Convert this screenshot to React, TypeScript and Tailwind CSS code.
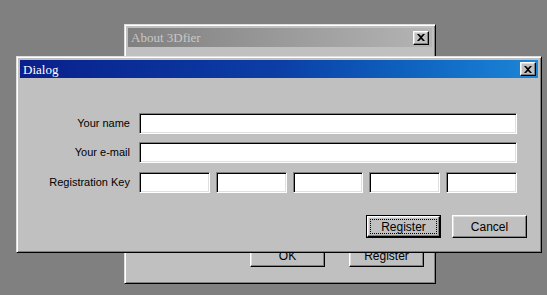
import React from "react";

const raised =
  "border border-t-white border-l-white border-b-black border-r-black shadow-[inset_-1px_-1px_#808080,inset_1px_1px_#dfdfdf]";
const sunken =
  "border border-t-[#808080] border-l-[#808080] border-b-white border-r-white shadow-[inset_1px_1px_#000,inset_-1px_-1px_#dfdfdf]";

function CloseBox() {
  return (
    <div
      className={`w-[16px] h-[14px] bg-[#c0c0c0] flex items-center justify-center ${raised}`}
    >
      <svg width="8" height="7" viewBox="0 0 8 7">
        <path d="M0 0h2l2 2 2-2h2L5 3.5 8 7H6L4 5 2 7H0l3-3.5z" fill="#000" />
      </svg>
    </div>
  );
}

function Field({ className = "" }: { className?: string }) {
  return <div className={`h-[21px] bg-white ${sunken} ${className}`} />;
}

function Button({
  label,
  primary,
  className = "",
}: {
  label: string;
  primary?: boolean;
  className?: string;
}) {
  if (primary) {
    return (
      <div className={`w-[75px] h-[23px] border border-black ${className}`}>
        <div className={`w-full h-full bg-[#c0c0c0] ${raised} p-[2px]`}>
          <div className="w-full h-full border border-dotted border-black flex items-center justify-center text-[12px] text-black">
            {label}
          </div>
        </div>
      </div>
    );
  }
  return (
    <div
      className={`w-[75px] h-[23px] bg-[#c0c0c0] ${raised} flex items-center justify-center text-[12px] text-black ${className}`}
    >
      {label}
    </div>
  );
}

export default function App() {
  return (
    <div
      className="relative w-[547px] h-[295px] bg-[#808080] overflow-hidden"
      style={{ fontFamily: '"Liberation Sans", Arial, sans-serif' }}
    >
      {/* back window */}
      <div className="absolute left-[124px] top-[24px] w-[312px] h-[260px] bg-[#c0c0c0] p-[2px] border border-t-[#dfdfdf] border-l-[#dfdfdf] border-b-black border-r-black shadow-[inset_1px_1px_#fff,inset_-1px_-1px_#808080]">
        <div className="h-[19px] mx-[1px] mt-[1px] bg-gradient-to-r from-[#808080] to-[#b4b4b4] flex items-center justify-between pl-[3px] pr-[3px]">
          <span
            className="text-[13px] text-[#c8c8c8] leading-none"
            style={{ fontFamily: '"Liberation Serif", "Times New Roman", serif' }}
          >
            About 3Dfier
          </span>
          <CloseBox />
        </div>
        <div className="flex gap-[24px] pl-[123px] pt-[197px]">
          <Button label="OK" />
          <Button label="Register" />
        </div>
      </div>

      {/* front dialog */}
      <div className="absolute left-[16px] top-[56px] w-[526px] h-[197px] bg-[#c0c0c0] p-[2px] border border-t-[#dfdfdf] border-l-[#dfdfdf] border-b-black border-r-black shadow-[inset_1px_1px_#fff,inset_-1px_-1px_#808080]">
        <div className="h-[18px] mx-[1px] mt-[1px] bg-gradient-to-r from-[#0a1f8c] via-[#0c3ea6] to-[#1c86d8] flex items-center justify-between pl-[3px] pr-[2px]">
          <span
            className="text-[13px] text-white leading-none"
            style={{ fontFamily: '"Liberation Serif", "Times New Roman", serif' }}
          >
            Dialog
          </span>
          <CloseBox />
        </div>

        <div className="flex flex-col pt-[35px] pl-[27px] pr-[22px] gap-[8px] text-[11px] text-black">
          <div className="flex items-center gap-[9px]">
            <div className="w-[84px] text-right">Your name</div>
            <Field className="flex-1" />
          </div>
          <div className="flex items-center gap-[9px]">
            <div className="w-[84px] text-right">Your e-mail</div>
            <Field className="flex-1" />
          </div>
          <div className="flex items-center gap-[9px] mt-[1px]">
            <div className="w-[84px] text-right">Registration Key</div>
            <div className="flex-1 flex gap-[6px]">
              <Field className="flex-1" />
              <Field className="flex-1" />
              <Field className="flex-1" />
              <Field className="flex-1" />
              <Field className="flex-1" />
            </div>
          </div>
          <div className="flex justify-end gap-[11px] mt-[14px] -mr-[10px]">
            <Button label="Register" primary />
            <Button label="Cancel" />
          </div>
        </div>
      </div>
    </div>
  );
}
